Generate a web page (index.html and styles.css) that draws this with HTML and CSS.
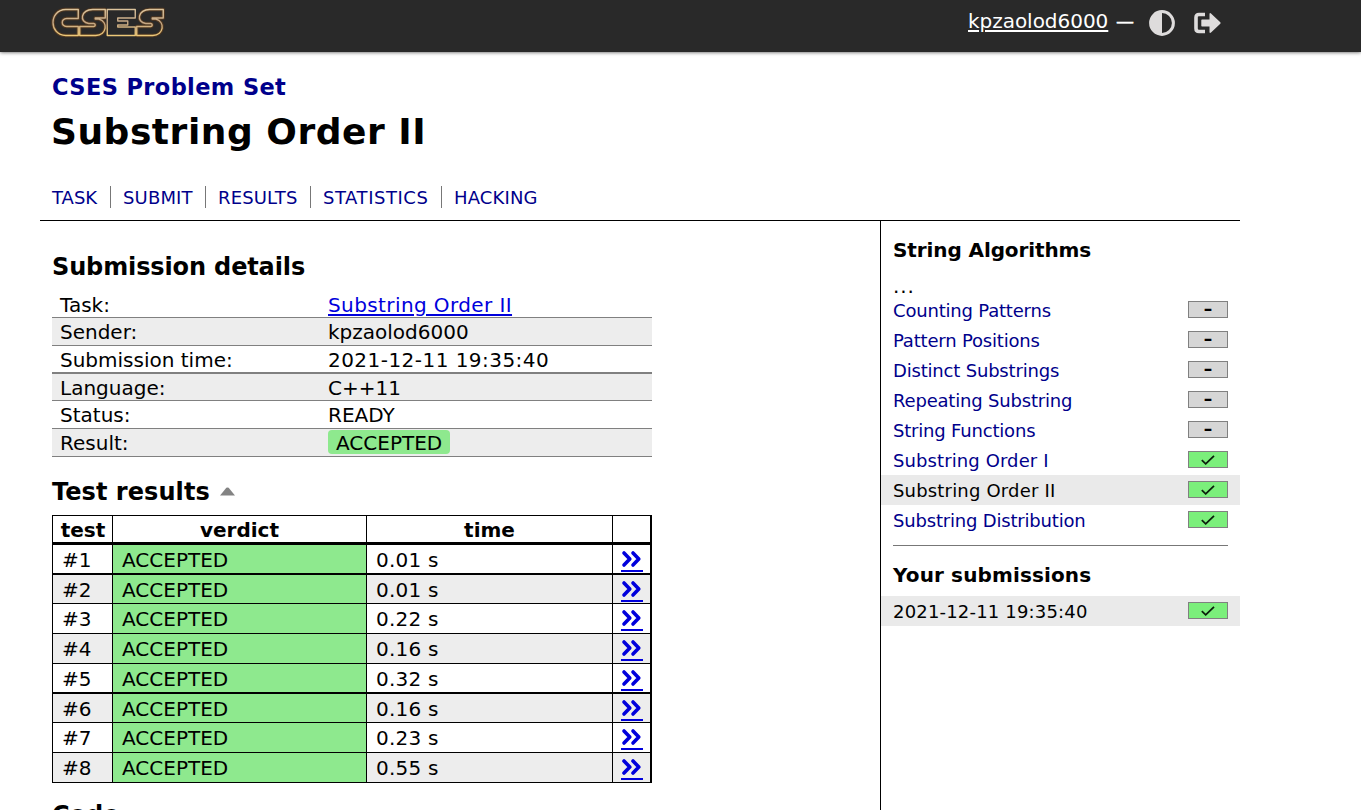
FILE: index.html
```html
<!DOCTYPE html>
<html lang="en">
<head>
<meta charset="utf-8">
<title>CSES - Substring Order II</title>
<link rel="stylesheet" href="styles.css">
</head>
<body>
<svg width="0" height="0" class="defs">
  <defs>
    <linearGradient id="gold" x1="0" y1="0" x2="0" y2="1"><stop offset="0" stop-color="#dcc49c"/><stop offset=".5" stop-color="#c4a684"/><stop offset="1" stop-color="#ecc878"/></linearGradient>
    <symbol id="chev" viewBox="0 0 22 20"><path d="M3 4L8.800 10L3 16M12 4L17.800 10L12 16" fill="none" stroke="#0000dc" stroke-width="3.600" stroke-linecap="round" stroke-linejoin="round"/></symbol>
    <symbol id="check" viewBox="0 0 14 10"><path d="M.8 5.2L4.7 8.8L13 .9" fill="none" stroke="#0b1f0b" stroke-width="1.8"/></symbol>
  </defs>
</svg>
<header class="header">
  <div class="header-inner">
    <svg class="logo" width="119" height="34" viewBox="0 0 117.500 34" fill="none" stroke-linejoin="round">
      <g stroke="#6b421c" stroke-width="3.4" opacity=".6"><path d="M27.500 5.500H15C-2 6-2 31 15 31.500H27.500V22.500H16C10 22 10 15 16 14.500H27.500Z"/><path d="M54.500 5.500H42C30 6 28 18 38 19.500H43C45 20 45 22 43 22.500H29V31.500H45C56 31 58 18 48 15H44.500V14H54.500Z"/><path d="M112.500 5.500H99C87 6 85 18 95 19.500H100C102 20 102 22 100 22.500H86V31.500H102C113 31 115 18 105 15H101.500V14H112.500Z"/></g>
      <g stroke="url(#gold)" stroke-width="1.4"><path d="M27.500 5.500H15C-2 6-2 31 15 31.500H27.500V22.500H16C10 22 10 15 16 14.500H27.500Z"/><path d="M54.500 5.500H42C30 6 28 18 38 19.500H43C45 20 45 22 43 22.500H29V31.500H45C56 31 58 18 48 15H44.500V14H54.500Z"/><path d="M56.500 5.500H84.500V14H67V17H77V21H67V23H84.500V31.500H56.500Z"/><path d="M112.500 5.500H99C87 6 85 18 95 19.500H100C102 20 102 22 100 22.500H86V31.500H102C113 31 115 18 105 15H101.500V14H112.500Z"/></g>
    </svg>
    <div class="controls">
      <a class="account">kpzaolod6000</a><span class="dash">—</span>
      <svg class="theme" width="26" height="26" viewBox="0 0 26 26"><circle cx="13" cy="13" r="11.400" fill="none" stroke="#dedcdc" stroke-width="3"/><path d="M13 1A12 12 0 0 0 13 25Z" fill="#dedcdc"/></svg>
      <svg class="logout" width="28" height="22" viewBox="0 0 28 22"><path d="M11 2.500H5Q2 2.500 2 5.500V16.500Q2 19.500 5 19.500H11" fill="none" stroke="#dedcdc" stroke-width="3.600"/><path d="M8 7.500H15.500V1.800Q15.800.6 17 1.400L26.300 10.200Q27 11 26.300 11.800L17 20.600Q15.800 21.400 15.500 20.200V14.500H8Q7.300 14.500 7.300 13.700V8.300Q7.300 7.500 8 7.500Z" fill="#dedcdc"/></svg>
    </div>
  </div>
</header>
<div class="page">
  <div class="title-block">
    <h3 class="crumb"><a>CSES Problem Set</a></h3>
    <h1>Substring Order II</h1>
    <nav class="nav"><a class="n1">TASK</a><a class="n2">SUBMIT</a><a class="n3">RESULTS</a><a class="n4">STATISTICS</a><a class="n5">HACKING</a></nav>
  </div>
  <div class="columns">
    <main class="content">
      <h2 class="h-details">Submission details</h2>
      <div class="details">
        <div class="row"><span>Task:</span><span><a class="link">Substring Order II</a></span></div>
        <div class="row alt"><span>Sender:</span><span>kpzaolod6000</span></div>
        <div class="row thick"><span>Submission time:</span><span class="date">2021-12-11 19:35:40</span></div>
        <div class="row alt short"><span>Language:</span><span>C++11</span></div>
        <div class="row"><span>Status:</span><span>READY</span></div>
        <div class="row alt last"><span>Result:</span><span><b class="verdict">ACCEPTED</b></span></div>
      </div>
      <h2 class="h-results"><span>Test results</span><svg width="15" height="9" viewBox="0 0 15 9"><path d="M0 8.500L6.300.8Q7.500 0 8.700.8L15 8.500Z" fill="#838383"/></svg></h2>
      <div class="results">
        <div class="head"><span>test</span><span>verdict</span><span>time</span><span></span></div>
        <div class="test t30 thick"><span>#1</span><span>ACCEPTED</span><span>0.01 s</span><span><svg class="chev"><use href="#chev"/></svg></span></div>
        <div class="test alt t29"><span>#2</span><span>ACCEPTED</span><span>0.01 s</span><span><svg class="chev"><use href="#chev"/></svg></span></div>
        <div class="test t30"><span>#3</span><span>ACCEPTED</span><span>0.22 s</span><span><svg class="chev"><use href="#chev"/></svg></span></div>
        <div class="test alt t30"><span>#4</span><span>ACCEPTED</span><span>0.16 s</span><span><svg class="chev"><use href="#chev"/></svg></span></div>
        <div class="test t30 thick"><span>#5</span><span>ACCEPTED</span><span>0.32 s</span><span><svg class="chev"><use href="#chev"/></svg></span></div>
        <div class="test alt t29"><span>#6</span><span>ACCEPTED</span><span>0.16 s</span><span><svg class="chev"><use href="#chev"/></svg></span></div>
        <div class="test t30"><span>#7</span><span>ACCEPTED</span><span>0.23 s</span><span><svg class="chev"><use href="#chev"/></svg></span></div>
        <div class="test alt t30"><span>#8</span><span>ACCEPTED</span><span>0.55 s</span><span><svg class="chev"><use href="#chev"/></svg></span></div>
      </div>
      <h2 class="h-code">Code</h2>
    </main>
    <aside class="sidebar">
      <h4>String Algorithms</h4>
      <div class="more">...</div>
      <div class="item"><a>Counting Patterns</a><i class="score">–</i></div>
      <div class="item"><a>Pattern Positions</a><i class="score">–</i></div>
      <div class="item"><a>Distinct Substrings</a><i class="score">–</i></div>
      <div class="item"><a>Repeating Substring</a><i class="score">–</i></div>
      <div class="item"><a>String Functions</a><i class="score">–</i></div>
      <div class="item plain"><a>Substring Order I</a><i class="score full"><svg width="14" height="10"><use href="#check"/></svg></i></div>
      <div class="item current"><a>Substring Order II</a><i class="score full"><svg width="14" height="10"><use href="#check"/></svg></i></div>
      <div class="item"><a>Substring Distribution</a><i class="score full"><svg width="14" height="10"><use href="#check"/></svg></i></div>
      <hr>
      <h4 class="yours">Your submissions</h4>
      <div class="item current submission"><a>2021-12-11 19:35:40</a><i class="score full"><svg width="14" height="10"><use href="#check"/></svg></i></div>
    </aside>
  </div>
</div>
</body>
</html>
```
FILE: styles.css
```css
* { box-sizing: border-box; }
html, body { height: 100%; }
body { margin: 0; background: #fff; color: #000; font: 20px/28px "DejaVu Sans", Verdana, sans-serif; overflow: hidden; display: flex; flex-direction: column; white-space: nowrap; }
h1, h2, h3, h4 { margin: 0; font-weight: bold; }
.defs { position: absolute; }
.header { flex: none; height: 52px; background: #292929; box-shadow: 0 0 4px rgba(0,0,0,.75); }
.header-inner { width: 1200px; margin-left: 40px; padding-left: 10px; display: flex; justify-content: space-between; }
.logo { margin-top: 4px; }
.controls { display: flex; width: 272px; color: #fff; }
.account { width: 140px; margin-top: 7px; letter-spacing: -.03px; text-decoration: underline; text-decoration-thickness: 2px; text-underline-offset: 2px; }
.dash { margin: 7px 0 0 8px; width: 18px; font-size: 18px; -webkit-text-stroke: .4px #fff; }
.theme { margin: 10px 0 0 15px; }
.logout { margin: 12px 0 0 19px; }
.page { flex: 1; width: 1200px; margin-left: 40px; display: flex; flex-direction: column; min-height: 0; }
.title-block { flex: none; height: 169px; padding: 20px 12px 0; border-bottom: 1px solid #000; }
.crumb { font-size: 22.500px; line-height: 30px; letter-spacing: .38px; color: #00008b; }
h1 { font-size: 36px; line-height: 50px; margin-top: 5px; margin-left: -1px; letter-spacing: .53px; }
.nav { display: flex; margin-top: 29px; font-size: 18px; line-height: 23px; height: 22px; color: #00008b; }
.nav a { border-left: 1px solid #777; padding-left: 12px; }
.nav .n1 { border: 0; padding: 0; width: 58px; }
.n2, .n3, .n4, .n5 { flex: none; letter-spacing: .15px; }
.n2 { width: 95px; } .n3 { width: 105px; } .n4 { width: 131px; letter-spacing: .55px; }
.columns { flex: 1; display: flex; min-height: 0; }
.content { width: 840px; padding: 31px 0 0 12px; overflow: hidden; }
h2 { font-size: 24px; line-height: 30px; }
.h-details { letter-spacing: -.13px; line-height: 31px; height: 30px; }
.details { width: 600px; margin-top: 8px; }
.row { display: grid; grid-template-columns: 268px 1fr; height: 28px; padding-left: 8px; line-height: 29px; border-bottom: 1px solid #808080; }
.row:first-child { line-height: 30px; }
.alt { background: #ededed; }
.row.thick { border-bottom-width: 2px; }
.row.short { height: 27px; }
.link { letter-spacing: .4px; color: #0000dc; text-decoration: underline; text-decoration-thickness: 2px; text-underline-offset: 2px; }
.date { letter-spacing: .46px; }
.verdict { display: inline-block; height: 24px; width: 122px; line-height: 26px; padding-left: 8px; border-radius: 4px; background: #8ee98e; font-weight: normal; vertical-align: top; margin-top: 1px; }
.h-results { margin-top: 19px; display: flex; align-items: center; gap: 10px; }
.h-results span { line-height: 32px; height: 30px; letter-spacing: .06px; }
.h-results svg { margin-top: 1px; }
.results { width: 600px; margin-top: 9px; border: 1px solid #000; border-right-width: 2px; border-bottom: 0; }
.head, .test { display: grid; grid-template-columns: 59px 254px 246px 38px; border-bottom: 1px solid #000; line-height: 30px; }
.head { height: 29px; border-bottom-width: 3px; font-weight: bold; text-align: center; line-height: 28px; }
.head span + span, .test span + span { border-left: 1px solid #000; }
.head span:first-child { padding-left: 1px; }
.test span { padding-left: 9px; overflow: hidden; }
.test span:nth-child(2) { background: #8ee98e; }
.test span:nth-child(3) { letter-spacing: .2px; }
.test span:nth-child(4) { padding-left: 8px; }
.test.thick { border-bottom-width: 2px; }
.t30 { height: 30px; } .t29 { height: 29px; }
.chev { display: block; width: 22px; height: 27px; padding: 4px 0 1px; border-bottom: 2px solid #0000dc; }
.h-code { margin-top: 17px; }
.sidebar { width: 360px; border-left: 1px solid #000; padding-top: 14px; font-size: 18px; }
h4 { font-size: 20px; line-height: 30px; padding-left: 12px; letter-spacing: -.1px; }
.more { padding-left: 12px; height: 30px; line-height: 43px; font-size: 20px; letter-spacing: .9px; }
.item { display: flex; justify-content: space-between; height: 30px; line-height: 31px; padding: 0 12px; color: #00008b; letter-spacing: -.19px; }
.plain { letter-spacing: .1px; }
.current { background: #eaeaea; color: #000; letter-spacing: .18px; }
.score { width: 40px; height: 17px; margin-top: 6px; border: 1px solid #808080; background: #d6d6d6; color: #000; display: flex; justify-content: center; align-items: center; font: bold 17px/15px "DejaVu Sans", sans-serif; }
.full { background: #7bef7b; }
hr { margin: 10px 12px 14px; border: 0; border-top: 1px solid #777; }
.yours { margin-bottom: 6px; letter-spacing: .13px; }
```
